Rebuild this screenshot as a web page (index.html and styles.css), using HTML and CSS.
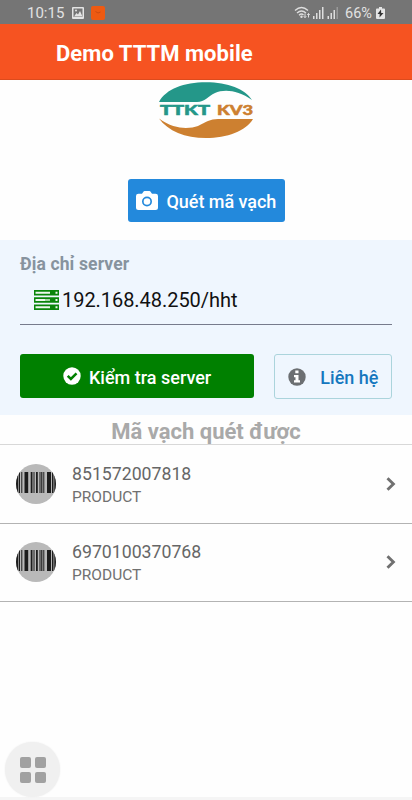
FILE: index.html
```html
<!DOCTYPE html>
<html lang="vi">
<head>
<meta charset="utf-8">
<meta name="viewport" content="width=device-width, initial-scale=1">
<title>Demo TTTM mobile</title>
<link rel="stylesheet" href="styles.css">
</head>
<body>
<div class="status">
  <span class="clock">10:15</span>
  <svg class="pic" width="12" height="12" viewBox="0 0 12 12"><path fill="#e4e4e4" fill-rule="evenodd" d="M1 0h10a1 1 0 0 1 1 1v10a1 1 0 0 1-1 1H1a1 1 0 0 1-1-1V1a1 1 0 0 1 1-1zM1.500 1.500V10h9V1.500z"/><path fill="#e4e4e4" d="M2 9.500 4.500 6l1.500 1.500L8 4l2.500 5.500z"/><circle cx="4" cy="3.600" r="1" fill="#e4e4e4"/></svg>
  <svg class="app" width="14" height="14" viewBox="0 0 14 14"><rect width="14" height="14" rx="2" fill="#ee5a12"/><path d="M4.500 5.500 7 7l2.500-1" fill="none" stroke="#c94b12"/></svg>
  <svg class="signals" width="46" height="14" viewBox="0 0 46 14"><g fill="none" stroke="#dedede" stroke-width="1.300"><path d="M1 4.500Q7.500-1.500 14 4.500M3 7Q7.500 3 12 7M5 9.200Q7.500 7 9.500 9"/><path stroke-width="1" d="M11 7.500v4M9.700 10.200 11 11.700l1.300-1.500M14.500 11.500v-4M13.200 8.900 14.500 7.500l1.300 1.400"/></g><circle cx="7.500" cy="10.700" r="1.200" fill="#dedede"/><path fill="#dedede" d="M19 10h1.500v3H19zM22 7h1.500v6H22zM25 4h1.500v9H25zM28 1h1.500v12H28zM33.500 10H35v3h-1.500zM36.500 7H38v6h-1.500zM39.500 4H41v9h-1.500z"/><path fill="#999" d="M42.500 1H44v12h-1.500z"/></svg>
  <span class="percent">66%</span>
  <svg class="battery" width="9" height="12" viewBox="0 0 9 12"><path fill="#e5e5e5" d="M3 0h3v1.500h2a1 1 0 0 1 1 1V11a1 1 0 0 1-1 1H1a1 1 0 0 1-1-1V2.500a1 1 0 0 1 1-1h2z"/><path fill="#333" d="M5 2.500 1.500 7h2.200L3.500 10.500 7.500 6H5.200z"/></svg>
</div>
<header class="header"><h1 class="title">Demo TTTM mobile</h1></header>
<section class="scan">
  <svg class="logo" width="96" height="58" viewBox="18 6 96 58">
    <path fill="#249789" d="M19 27C26 14 44 7.300 66 7.300S105 14 112 25C98 15 84 14 75 18C68 21 65 27 57 27z"/>
    <path fill="#cd8030" d="M19 43.500C35 55 49 54 58 51C66 47 70 44 78 44H113C106 56 87 63 66 63S28 56 19 43.500z"/>
    <text class="logo-text logo-teal" x="20" y="39.500" textLength="50" lengthAdjust="spacingAndGlyphs">TTKT</text>
    <text class="logo-text logo-orange" x="77" y="39.500" textLength="36" lengthAdjust="spacingAndGlyphs">KV3</text>
  </svg>
  <button class="btn btn-scan">
    <svg width="22" height="19" viewBox="0 0 22 19"><path fill="#fff" fill-rule="evenodd" d="M2.500 2.800H6L7.400.700Q7.800 0 8.600 0h4.800q.8 0 1.200.7L16 2.800h3.500Q22 2.800 22 5v11.500q0 2.500-2.500 2.500h-17Q0 19 0 16.500V5q0-2.200 2.500-2.200zM11 5.500a5 5 0 1 0 0 10 5 5 0 0 0 0-10z"/><circle cx="11" cy="10.500" r="3.300" fill="#fff"/></svg>
    <span class="scan-text">Quét mã vạch</span>
  </button>
</section>
<section class="server">
  <div class="label">Địa chỉ server</div>
  <div class="field">
    <svg width="25" height="20" viewBox="0 0 25 20"><path fill="#0a850a" d="M0 0h25v5.600H0zM0 7.200h25v5.600H0zM0 14.400h25V20H0z"/><path fill="#eef8ee" d="M1.500 1.800H16v2H1.500zM1.500 9H11v2H1.500zM1.500 16.200H16v2H1.500zM21.500 1.800h2v2h-2zM21.500 9h2v2h-2zM21.500 16.200h2v2h-2z"/><path fill="#a5d4a5" d="M11 9h5v2h-5z"/></svg>
    <span class="address">192.168.48.250/hht</span>
  </div>
  <div class="actions">
    <button class="btn btn-check">
      <svg width="18" height="18" viewBox="0 0 18 18"><circle cx="9" cy="9" r="8.700" fill="#fff"/><path d="m4.700 8.800 3.200 3.200 5.600-5.600" fill="none" stroke="#008000" stroke-width="2.500"/></svg>
      <span class="check-text">Kiểm tra server</span>
    </button>
    <button class="btn btn-contact">
      <svg width="18" height="18" viewBox="0 0 18 18"><circle cx="9" cy="9" r="8.700" fill="#6c6f72"/><path fill="#fff" d="M7.300 2.600h3.200v2.700H7.300zM6 7h4.500v5.300H12v2.200H6v-2.200h1.500V9.200H6z"/></svg>
      <span class="contact-text">Liên hệ</span>
    </button>
  </div>
</section>
<h2 class="heading">Mã vạch quét được</h2>
<ul class="list">
  <li class="item">
    <svg class="avatar" width="40" height="40" viewBox="0 0 40 40"><defs><clipPath id="disc"><circle cx="20" cy="20" r="20"/></clipPath></defs><g id="barcode" clip-path="url(#disc)"><path fill="#b9b9b9" d="M0 0h40v40H0z"/><path fill="#1c1c1c" d="M0 8h2.300v21H0zM3 8h1v21H3zM5.300 8h1v21h-1zM8.500 8h3.700v21H8.500zM14.700 8h1.800v21h-1.800zM17.500 8h1v21h-1zM20 8h1.800v21H20zM23.500 8h1v21h-1zM25.200 8h1.200v21h-1.200zM27.300 8h1v21h-1zM31 8h4v21h-4zM36 8h1.500v21H36zM38.300 8H40v21h-1.700z"/></g></svg>
    <div class="info"><div class="code">851572007818</div><div class="kind">PRODUCT</div></div>
    <svg class="arrow" width="10" height="14" viewBox="0 0 10 14"><path d="m1.500 1.200 5.900 5.800-5.900 5.800" fill="none" stroke="#707070" stroke-width="2.900"/></svg>
  </li>
  <li class="item">
    <svg class="avatar" width="40" height="40" viewBox="0 0 40 40"><use href="#barcode"/></svg>
    <div class="info"><div class="code">6970100370768</div><div class="kind">PRODUCT</div></div>
    <svg class="arrow" width="10" height="14" viewBox="0 0 10 14"><path d="m1.500 1.200 5.900 5.800-5.900 5.800" fill="none" stroke="#707070" stroke-width="2.900"/></svg>
  </li>
</ul>
<div class="bottom-edge"></div>
<button class="fab"><i></i><i></i><i></i><i></i></button>
</body>
</html>
```
FILE: styles.css
```css
* { box-sizing: border-box; }
body {
  margin: 0;
  height: 800px;
  display: flex;
  flex-direction: column;
  overflow: hidden;
  background: #fefefe;
  font-family: Roboto, "Noto Sans", sans-serif;
  white-space: nowrap;
}
svg { display: block; flex: none; }
button { border: 0; padding: 0; font-family: inherit; }
.status {
  height: 24px;
  display: flex;
  align-items: center;
  padding: 1px 27px 0;
  background: #757575;
  color: #e2e2e2;
  font-size: 15px;
}
.clock { width: 45px; }
.app { margin-left: 7px; }
.signals { margin-left: auto; }
.percent { margin: 1px 3px 0 5px; width: 28px; font-size: 14.500px; }
.header {
  height: 56px;
  padding: 5px 56px 0;
  display: flex;
  align-items: center;
  background: #f65321;
  border-bottom: 1px solid #dc4b1d;
}
.title { margin: 0; color: #fff; font-size: 22px; line-height: 28px; font-weight: 700; letter-spacing: 0.050px; }
.scan { height: 160px; display: flex; flex-direction: column; align-items: center; padding-top: 1px; }
.logo { margin-right: 1px; }
.logo-text { font: 900 12.500px Lato, sans-serif; stroke-width: 0.500; }
.logo-teal { fill: #249789; stroke: #249789; }
.logo-orange { fill: #cd8030; stroke: #cd8030; }
.btn { display: flex; align-items: center; border-radius: 3px; font-weight: 500; font-size: 18px; }
.btn-scan { width: 157px; height: 43px; margin-top: 40px; padding-left: 8px; gap: 9px; background: #2389dc; color: #fff; }
.scan-text { padding-top: 1px; letter-spacing: -0.050px; }
.server { height: 175px; padding: 12px 20px 0; background: #eff6fe; }
.label { height: 24px; line-height: 25px; font-size: 17.500px; letter-spacing: 0.120px; font-weight: 700; color: #87939e; }
.field { height: 49px; display: flex; align-items: center; gap: 3px; padding: 0 0 1px 14px; border-bottom: 1px solid #777b8c; font-size: 20px; color: #111; }
.address { letter-spacing: -0.050px; }
.actions { display: flex; gap: 20px; margin-top: 29px; }
.btn-check { width: 235px; height: 44px; padding-left: 43px; gap: 8px; background: #008000; color: #fff; }
.check-text { padding-top: 2px; }
.btn-contact { width: 118px; height: 45px; padding-left: 13px; gap: 14px; border: 1px solid #abd4dc; background: transparent; color: #1577be; }
.contact-text { padding-top: 1px; }
.heading { height: 30px; margin: 0; padding-top: 1px; text-align: center; font-size: 22px; line-height: 31px; font-weight: 700; color: #a9a9a9; border-bottom: 1px solid #d8d8d8; }
.list { list-style: none; margin: 0; padding: 0; }
.item { height: 78.500px; display: flex; align-items: center; padding: 0 16px; border-bottom: 1px solid #b3b3b3; }
.info { margin-left: 16px; flex: 1; padding-top: 3px; color: #666; }
.code { font-size: 17.700px; line-height: 23px; }
.kind { font-size: 15.500px; line-height: 22px; color: #707070; }
.bottom-edge { height: 3px; margin-top: auto; background: #f5f5f5; }
.fab {
  position: absolute;
  left: 5px;
  top: 742px;
  width: 55px;
  height: 55px;
  border-radius: 50%;
  padding: 15px;
  display: grid;
  grid-template-columns: 11px 11px;
  gap: 4px;
  background: #f0f0f0;
  box-shadow: 0 0 2px #eee;
}
.fab i { width: 11px; height: 11px; border-radius: 2px; background: #a1a1a1; }
```
